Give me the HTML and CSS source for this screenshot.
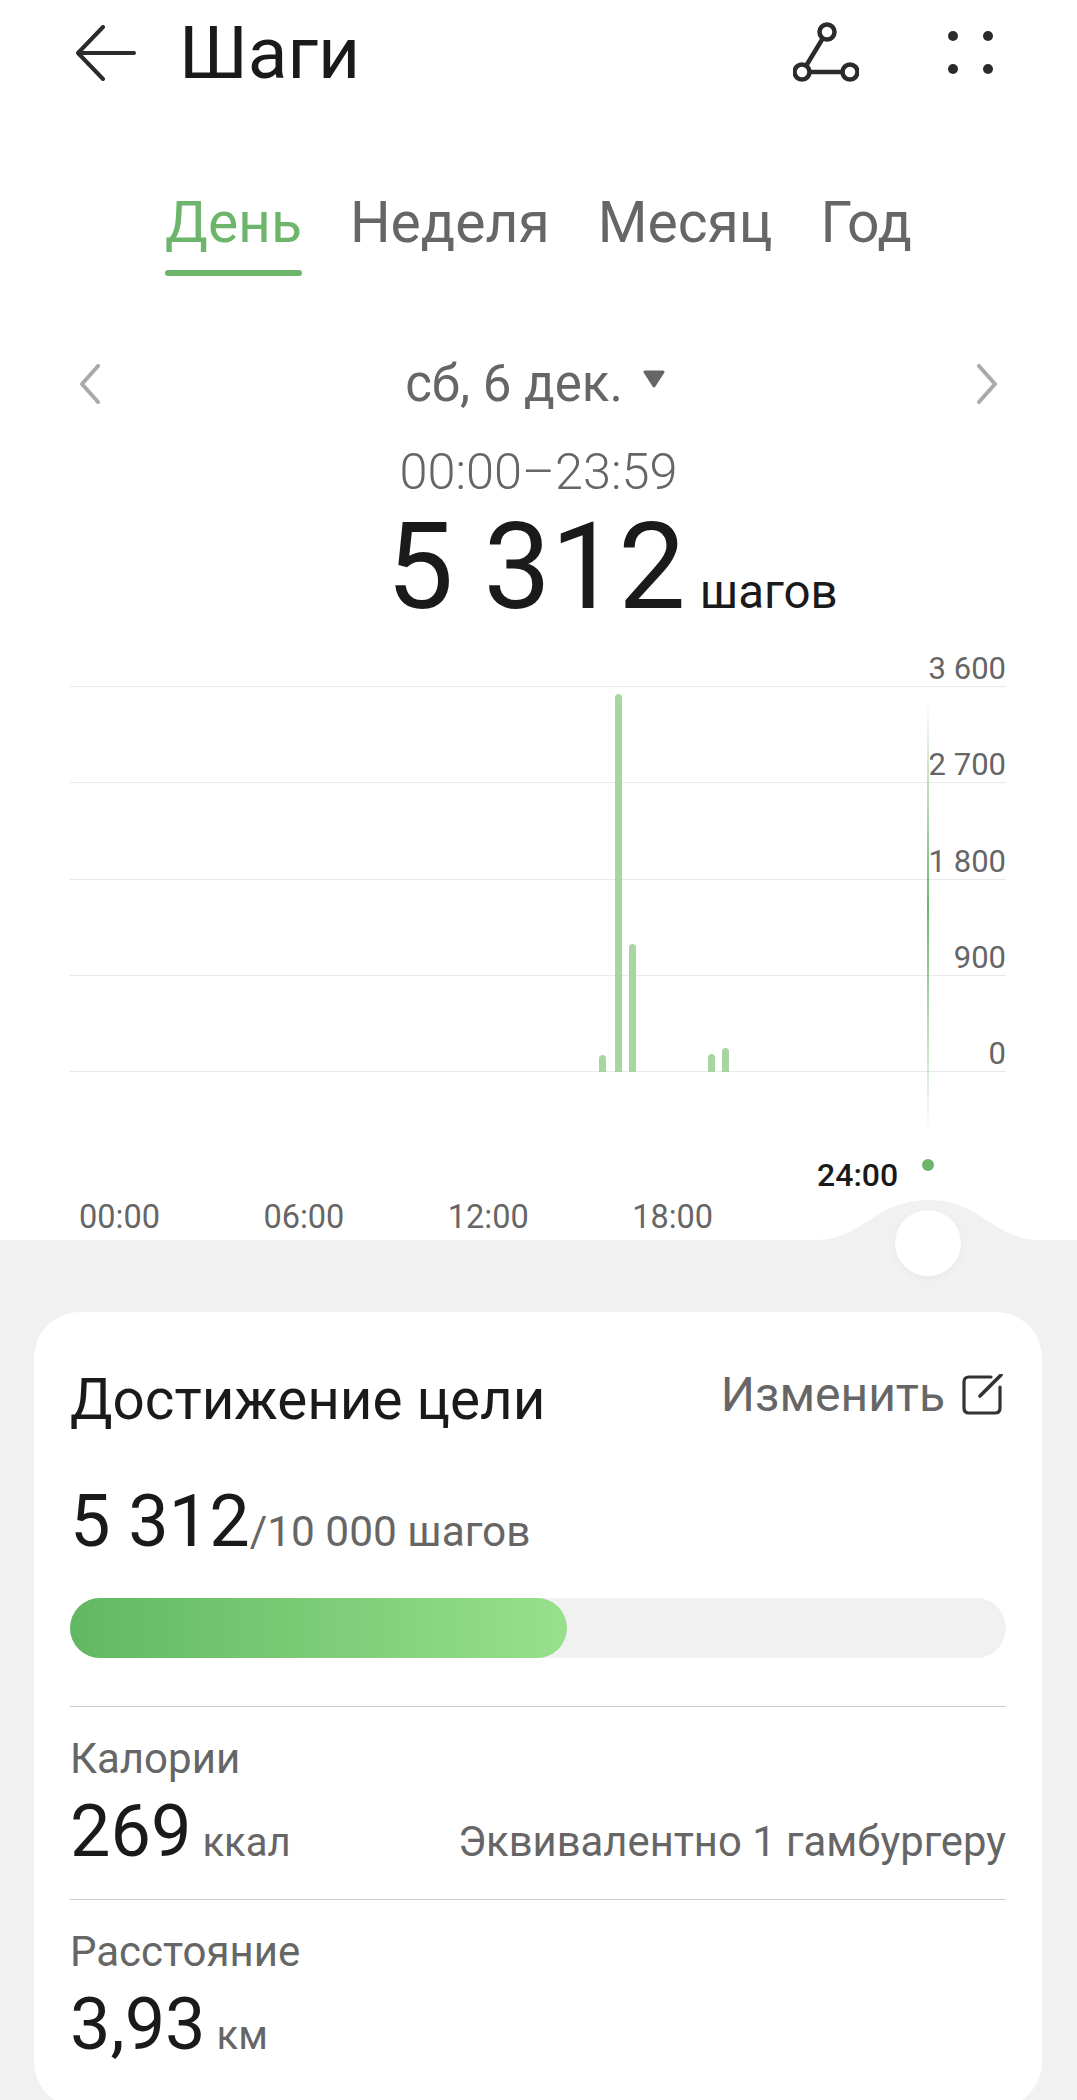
FILE: index.html
```html
<!DOCTYPE html>
<html lang="ru">
<head>
    <meta charset="UTF-8">
    <meta name="viewport" content="width=device-width, initial-scale=1.0">
    <title>Шаги</title>
    <link rel="stylesheet" href="styles.css">
</head>
<body>
    <div class="page">
        <section class="top">
            <!-- App bar -->
            <header class="app-bar">
                <svg class="icon-back" width="60" height="56" viewBox="0 0 60 56"><path d="M27 2 L2 28 L27 54 M2 28 H58" fill="none" stroke="#2b2b2b" stroke-width="4" stroke-linecap="round" stroke-linejoin="round"/></svg>
                <h1 class="app-title">Шаги</h1>
                <svg class="icon-share" width="66" height="62" viewBox="0 0 66 62"><g fill="none" stroke="#2b2b2b" stroke-width="4.5"><circle cx="34" cy="10" r="7.5"/><circle cx="9" cy="50" r="7.5"/><circle cx="57" cy="50" r="7.5"/><path d="M30 16 L13 44 M16.5 50 H49.5"/></g></svg>
                <svg class="icon-more" width="46" height="44" viewBox="0 0 46 44"><g fill="#2b2b2b"><circle cx="5" cy="5" r="5"/><circle cx="40" cy="5" r="5"/><circle cx="5" cy="38" r="5"/><circle cx="40" cy="38" r="5"/></g></svg>
            </header>

            <!-- Period tabs -->
            <nav class="tabs">
                <div class="tab active">День</div>
                <div class="tab">Неделя</div>
                <div class="tab">Месяц</div>
                <div class="tab">Год</div>
            </nav>

            <div class="date-row">
                <svg width="22" height="40" viewBox="0 0 22 40"><path d="M19 2 L3 20 L19 38" fill="none" stroke="#aaa" stroke-width="4" stroke-linecap="round" stroke-linejoin="round"/></svg>
                <div class="date">сб, 6 дек.<svg class="date-caret" width="24" height="18" viewBox="0 0 24 18"><path d="M3 2 H21 L12 16 Z" fill="#666" stroke="#666" stroke-width="3" stroke-linejoin="round"/></svg></div>
                <svg width="22" height="40" viewBox="0 0 22 40"><path d="M3 2 L19 20 L3 38" fill="none" stroke="#aaa" stroke-width="4" stroke-linecap="round" stroke-linejoin="round"/></svg>
            </div>

            <div class="range">00:00–23:59</div>
            <div class="total"><span class="total-num">5 312</span><span class="total-unit">шагов</span></div>

            <!-- Chart -->
            <div class="chart">
                <div class="grid-row first">3 600</div>
                <div class="grid-row">2 700</div>
                <div class="grid-row">1 800</div>
                <div class="grid-row">900</div>
                <div class="grid-row">0</div>
                <div class="bar" style="left: 529px; height: 17px"></div>
                <div class="bar" style="left: 545px; height: 378px"></div>
                <div class="bar" style="left: 559px; height: 128px"></div>
                <div class="bar" style="left: 638px; height: 18px"></div>
                <div class="bar" style="left: 652px; height: 24px"></div>
            </div>
            <div class="x-axis">
                <span>00:00</span>
                <span>06:00</span>
                <span>12:00</span>
                <span>18:00</span>
            </div>

            <!-- Time cursor over the chart -->
            <div class="cursor-line"></div>
            <div class="cursor-dot"></div>
            <div class="cursor-time">24:00</div>
            <svg class="cursor-bump" width="232" height="40" viewBox="0 0 232 40"><path d="M4 40 C50 40 63 0 116 0 C169 0 182 40 228 40 Z" fill="#f1f1f1"/></svg>
            <div class="cursor-knob"></div>
        </section>

        <section class="bottom">
            <div class="card">
                <div class="card-head">
                    <h2 class="card-title">Достижение цели</h2>
                    <div class="edit">Изменить
                        <svg class="edit-icon" width="42" height="42" viewBox="0 0 42 42"><path d="M30 3 H8 Q3 3 3 8 V34 Q3 39 8 39 H34 Q39 39 39 34 V13" fill="none" stroke="#333" stroke-width="3.2" stroke-linecap="round"/><path d="M19 22 L40 1" fill="none" stroke="#333" stroke-width="3.6" stroke-linecap="round"/></svg>
                    </div>
                </div>
                <div class="goal">5 312<span class="goal-of">/10 000 шагов</span></div>
                <div class="progress"><div class="progress-fill" style="width: 53.12%"></div></div>

                <div class="stat">
                    <div class="stat-label">Калории</div>
                    <div class="stat-row">
                        <div>269<span class="unit">ккал</span></div>
                        <div class="stat-note">Эквивалентно 1 гамбургеру</div>
                    </div>
                </div>
                <div class="stat">
                    <div class="stat-label">Расстояние</div>
                    <div class="stat-row">
                        <div>3,93<span class="unit">км</span></div>
                    </div>
                </div>
            </div>
        </section>
    </div>
</body>
</html>
```

FILE: styles.css
```css
* { margin: 0; padding: 0; box-sizing: border-box; }
body {
    font-family: 'Roboto', 'Liberation Sans', sans-serif;
    background-color: #f1f1f1;
    color: #1a1a1a;
}
.page {
    width: 1077px;
    height: 2100px;
    overflow: hidden;
}

/* top white part */
.top {
    position: relative;
    height: 1240px;
    background-color: #fff;
}
.app-bar {
    display: flex;
    align-items: center;
    height: 104px;
    padding-left: 76px;
}
.icon-back { flex: none; margin-top: 2px; }
.app-title {
    flex: 1;
    margin-left: 43px;
    padding-top: 2px;
    font-size: 73px;
    font-weight: 400;
    line-height: 104px;
}
.icon-share { margin-right: 89px; margin-top: 2px; }
.icon-more { margin-right: 83px; margin-top: 2px; }

.tabs {
    display: flex;
    justify-content: center;
    gap: 48px;
    margin-top: 84px;
}
.tab {
    font-size: 57px;
    line-height: 70px;
    color: #666;
}
.tab.active { color: #6cb56b; }
.tab.active::after {
    content: "";
    display: block;
    height: 6px;
    margin-top: 12px;
    border-radius: 3px;
    background-color: #6cb56b;
}

.date-row {
    display: flex;
    justify-content: space-between;
    align-items: center;
    height: 60px;
    margin-top: 78px;
    padding: 0 79px;
}
.date {
    display: flex;
    align-items: center;
    gap: 19px;
    margin-right: 6px;
    font-size: 51px;
    line-height: 60px;
    color: #666;
}
.date-caret { margin-top: -10px; }
.range {
    margin-top: 28px;
    font-size: 50.5px;
    font-weight: 300;
    line-height: 60px;
    color: #666;
    text-align: center;
}
.total {
    display: flex;
    align-items: baseline;
    justify-content: center;
    margin-top: 5px;
    padding-left: 147px;
    line-height: 120px;
}
.total-num { font-size: 120px; }
.total-unit { margin-left: 14px; font-size: 47.5px; line-height: 1; }

/* chart */
.chart {
    position: relative;
    margin: 0 71px 0 70px;
}
.grid-row {
    display: flex;
    align-items: flex-end;
    justify-content: flex-end;
    height: 96.25px;
    border-bottom: 1px solid #e9e9e9;
    font-size: 31px;
    line-height: 34px;
    color: #666;
}
.grid-row.first { height: 60px; }
.bar {
    position: absolute;
    bottom: 0;
    width: 7px;
    border-radius: 4px 4px 0 0;
    background-color: #a8d5a2;
}
.x-axis {
    display: flex;
    margin-top: 127px;
    padding-left: 79px;
    font-size: 32.5px;
    line-height: 36px;
    color: #666;
}
.x-axis span { width: 184.4px; }

.cursor-line {
    position: absolute;
    left: 927px;
    top: 697px;
    width: 2px;
    height: 438px;
    background: linear-gradient(to bottom, rgba(108, 181, 107, 0), #6cb56b 48%, rgba(108, 181, 107, 0));
}
.cursor-dot {
    position: absolute;
    left: 922px;
    top: 1159px;
    width: 12px;
    height: 12px;
    border-radius: 50%;
    background-color: #6cb56b;
}
.cursor-time {
    position: absolute;
    left: 817px;
    top: 1157px;
    font-size: 32px;
    font-weight: 500;
    line-height: 36px;
}
.cursor-bump {
    position: absolute;
    left: 812px;
    top: 1200px;
}
.cursor-knob {
    position: absolute;
    left: 895px;
    top: 1210px;
    width: 66px;
    height: 66px;
    border-radius: 50%;
    background-color: #fff;
    box-shadow: 0 2px 10px rgba(0, 0, 0, 0.04);
}

/* card */
.bottom {
    padding: 72px 35px 0 34px;
}
.card {
    height: 796px;
    padding: 50px 36px 0;
    border-radius: 46px;
    background-color: #fff;
}
.card-head {
    display: flex;
    justify-content: space-between;
    align-items: flex-start;
}
.card-title {
    font-size: 56.6px;
    font-weight: 400;
    line-height: 76px;
}
.edit {
    display: flex;
    align-items: center;
    gap: 16px;
    font-size: 48px;
    line-height: 66px;
    color: #666;
}
.edit-icon { margin-right: 3px; }
.goal {
    margin-top: 44px;
    font-size: 72px;
    line-height: 80px;
}
.goal-of {
    font-size: 42.4px;
    line-height: 1;
    color: #666;
}
.progress {
    height: 60px;
    margin: 36px 0 48px;
    border-radius: 30px;
    background-color: #f1f1f1;
}
.progress-fill {
    height: 100%;
    border-radius: 30px;
    background: linear-gradient(to right, #62b862, #98e08c);
}
.stat {
    padding: 27px 0;
    border-top: 1px solid #ccc;
}
.stat-label {
    font-size: 42px;
    line-height: 50px;
    color: #666;
}
.stat-row {
    display: flex;
    justify-content: space-between;
    align-items: baseline;
    margin-top: 8px;
    font-size: 72px;
    line-height: 80px;
}
.unit {
    margin-left: 11px;
    font-size: 40px;
    line-height: 1;
    color: #666;
}
.stat-note {
    font-size: 41.8px;
    line-height: 1;
    color: #666;
}
```
